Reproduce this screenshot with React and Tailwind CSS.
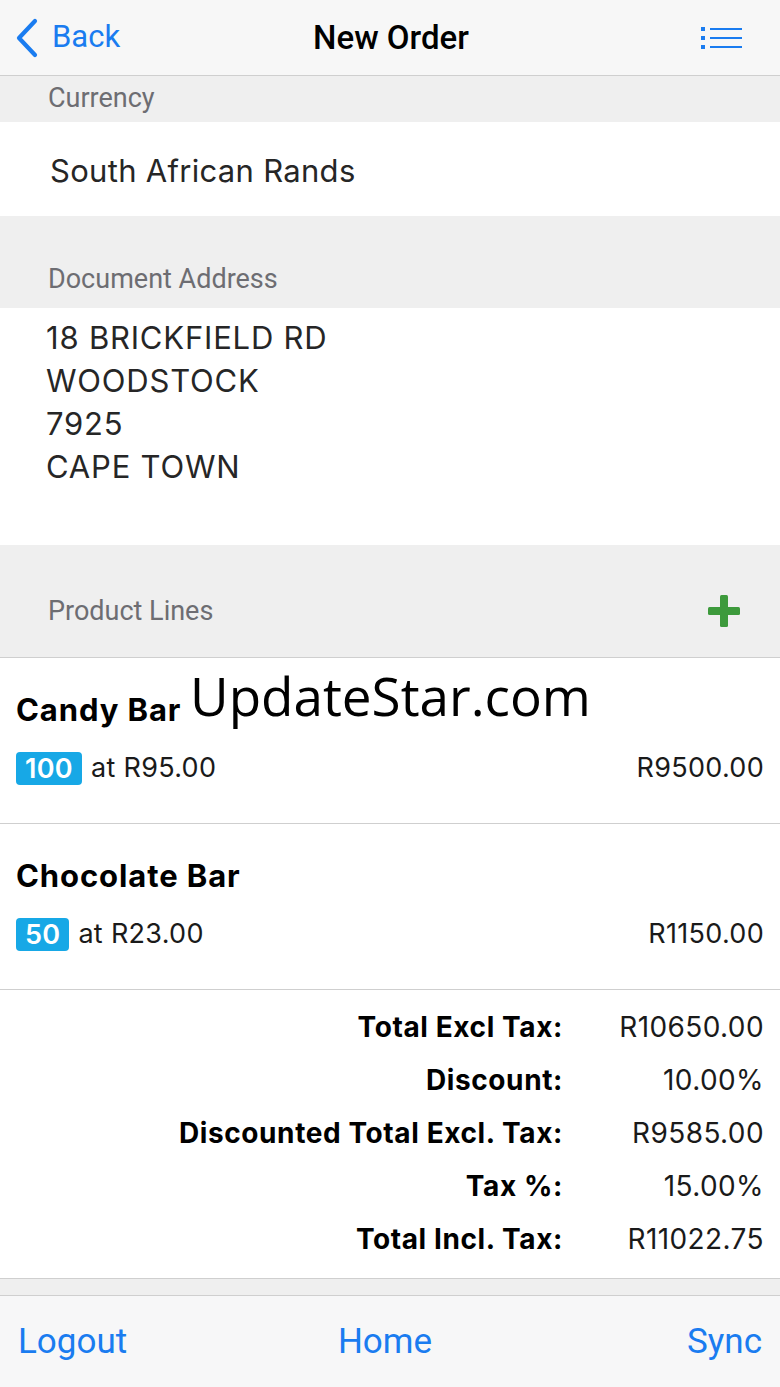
const sans = { fontFamily: 'Inter, "Liberation Sans", sans-serif' };
const ios = { fontFamily: 'Roboto, "Liberation Sans", sans-serif' };

const address = ['18 BRICKFIELD RD', 'WOODSTOCK', '7925', 'CAPE TOWN'];

const lines = [
  { name: 'Candy Bar', qty: 100, price: 'R95.00', total: 'R9500.00' },
  { name: 'Chocolate Bar', qty: 50, price: 'R23.00', total: 'R1150.00' },
];

const totals = [
  ['Total Excl Tax:', 'R10650.00'],
  ['Discount:', '10.00%'],
  ['Discounted Total Excl. Tax:', 'R9585.00'],
  ['Tax %:', '15.00%'],
  ['Total Incl. Tax:', 'R11022.75'],
];

function BackChevron() {
  return (
    <svg width="26" height="40" viewBox="0 0 26 40" fill="none" stroke="#1a7cf0" strokeWidth="4.2" strokeLinecap="round" strokeLinejoin="round">
      <path d="M21 3 L5 20 L21 37" />
    </svg>
  );
}

function MenuIcon() {
  return (
    <svg width="42" height="26" viewBox="0 0 42 26" fill="#1a7cf0">
      <rect x="0" y="2" width="4" height="4" />
      <rect x="0" y="11" width="4" height="4" />
      <rect x="0" y="20" width="4" height="4" />
      <rect x="9" y="3" width="32" height="2" />
      <rect x="9" y="12" width="32" height="2" />
      <rect x="9" y="21" width="32" height="2" />
    </svg>
  );
}

function PlusIcon() {
  return (
    <svg width="32" height="32" viewBox="0 0 32 32" fill="#3d9a3c">
      <rect x="12" y="0" width="8" height="32" rx="1.5" />
      <rect x="0" y="12" width="32" height="8" rx="1.5" />
    </svg>
  );
}

export default function App() {
  return (
    <div className="flex min-h-[1387px] w-[780px] flex-col bg-white" style={sans}>
      <header className="flex h-[76px] items-center border-b border-[#cfcfcf] bg-[#f7f7f7] pl-[14px] pr-3" style={ios}>
        <div className="flex w-[200px] items-center gap-[12px] text-[#1a7cf0]">
          <BackChevron />
          <span className="text-[31px]">Back</span>
        </div>
        <h1 className="flex-1 text-center text-[33px] font-medium text-black">New Order</h1>
        <div className="flex w-[200px] justify-end pr-[25px]">
          <MenuIcon />
        </div>
      </header>

      <div className="flex h-[46px] items-center bg-[#efefef] px-12 pb-[2px] text-[27px] text-[#6d6d72]" style={ios}>Currency</div>
      <div className="flex h-[94px] items-center px-[50px] pt-[4px] text-[31px] tracking-[0.3px] text-[#262626]">South African Rands</div>

      <div className="flex h-[92px] items-end bg-[#efefef] px-12 pb-[9px] text-[27px] text-[#6d6d72]" style={ios}>Document Address</div>
      <div className="h-[237px] px-[46px] pt-[8px] text-[31px] leading-[43px] tracking-[0.8px] text-[#262626]">
        {address.map((line) => <p key={line}>{line}</p>)}
      </div>

      <div className="flex h-[113px] items-end justify-between border-b border-[#cfcfcf] bg-[#efefef] pb-[30px] pl-12 pr-10" style={ios}>
        <span className="text-[27px] leading-[32px] text-[#6d6d72]">Product Lines</span>
        <PlusIcon />
      </div>

      {lines.map((line, i) => (
        <div key={line.name} className="relative flex h-[166px] flex-col justify-center gap-[15px] border-b border-[#cfcfcf] px-4 pb-[6px]">
          <p className="text-[31px] font-bold tracking-[0.9px] text-black">{line.name}</p>
          <div className="flex items-center text-[27px] tracking-[0.3px] text-[#1a1a1a]">
            <span className="rounded-[4px] bg-[#17a8e6] px-[9px] text-[27px] font-semibold leading-[33px] text-white">{line.qty}</span>
            <span className="ml-[9px]">at {line.price}</span>
            <span className="ml-auto">{line.total}</span>
          </div>
          {i === 0 ? (
            <span className="absolute left-[190px] top-[-2px] text-[53px] text-black" style={{ fontFamily: '"Open Sans", sans-serif' }}>UpdateStar.com</span>
          ) : null}
        </div>
      ))}

      <div className="flex h-[288px] flex-col justify-center gap-[17px] pb-[3px] pr-4 text-[28px] tracking-[0.6px]">
        {totals.map(([label, value]) => (
          <div key={label} className="flex items-center leading-[36px]">
            <span className="flex-1 text-right font-bold text-black">{label}</span>
            <span className="w-[201px] text-right tracking-[0.4px] text-[#1a1a1a]">{value}</span>
          </div>
        ))}
      </div>

      <div className="h-[18px] border-y border-[#cfcfcf] bg-[#efefef]" />
      <footer className="grid h-[93px] grid-cols-3 items-center bg-[#f7f7f8] px-[18px] text-[35px] text-[#1a7cf0]" style={ios}>
        <span>Logout</span>
        <span className="pr-[10px] text-center">Home</span>
        <span className="text-right">Sync</span>
      </footer>
    </div>
  );
}
